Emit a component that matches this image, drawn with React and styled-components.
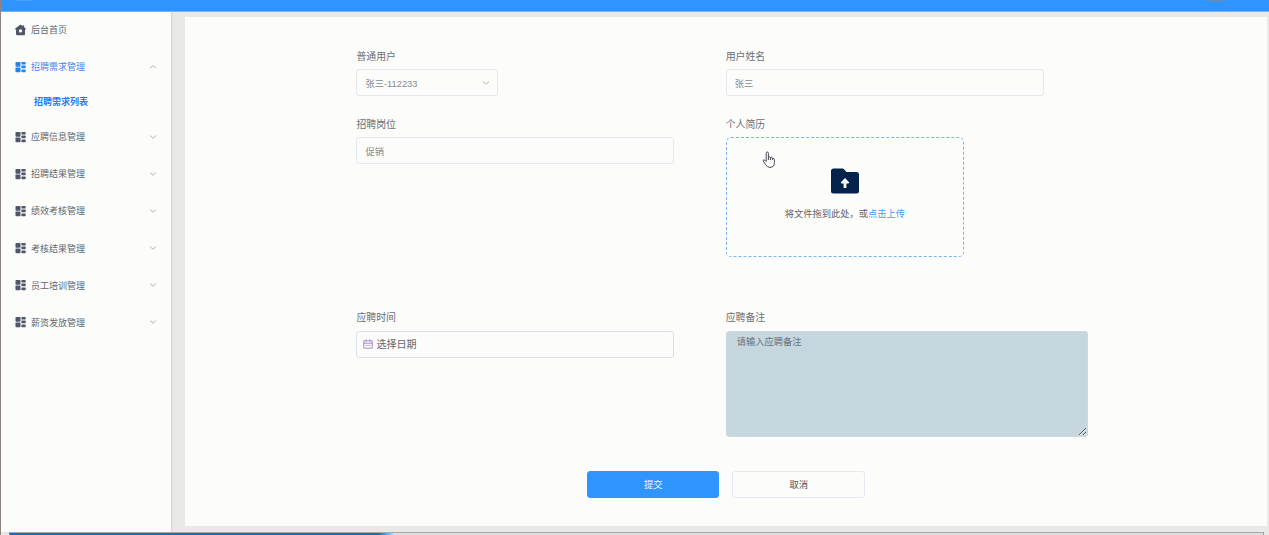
import React from 'react'
import styled, { createGlobalStyle } from 'styled-components'

const GlobalStyle = createGlobalStyle`
* {
  box-sizing:border-box;
}
body {
  margin:0;
  overflow:hidden;
  font-family:"Liberation Sans", "Noto Sans CJK SC", sans-serif;
  color:#606266;
}
`
const Page = styled.div`
display:flex;
flex-direction:column;
height:535px;
border-left:1px solid #8d8380;
background-color:#e9e9e8;
`
const Header = styled.header`
display:flex;
justify-content:space-between;
flex:none;
height:12px;
padding:0 45px 0 15px;
background-color:#3094ff;
border-bottom:1px solid #75b5f8;
`
const Logo = styled.div`
width:17px;
height:1px;
background-color:#48a0fc;
`
const Avatar = styled.div`
width:16px;
height:2px;
border-radius:0 0 8px 8px;
background-color:#5b8fc4;
`
const Body = styled.div`
display:flex;
height:520px;
`
const Sidebar = styled.nav`
width:170px;
flex:none;
background-color:#fcfcfb;
box-shadow:1px 0 2px rgba(0, 0, 0, 0.1);
`
const MenuItem = styled.div`
display:flex;
align-items:center;
height:37.1px;
padding:0 14px 2px 13px;
font-size:9px;
color:${(props) => (props.$active ? '#4a86e8' : '#62666d')};
svg {
  flex:none;
}
`
const MenuText = styled.span`
flex:1;
margin-left:5px;
white-space:nowrap;
`
const SubItem = styled.div`
height:33px;
padding-left:33px;
line-height:33px;
font-size:9px;
font-weight:bold;
color:#2878ec;
`
const Card = styled.main`
width:1082px;
height:509px;
margin:4.5px 0 0 14px;
padding:33px 0 0 171.4px;
background-color:#fcfcfb;
`
const Form = styled.div`
display:grid;
grid-template-columns:369.3px 362px;
grid-template-rows:68px 193.5px 159.5px;
`
const Field = styled.div`
display:flex;
flex-direction:column;
align-items:flex-start;
`
const Label = styled.label`
height:19.9px;
line-height:14px;
font-size:9.9px;
color:#6b6e75;
`
const Box = styled.div`
display:flex;
align-items:center;
width:${(props) => props.$width || 318}px;
height:27px;
padding:0 7px 0 8px;
border:1px solid ${(props) => (props.$dark ? '#dcdfe6' : '#e7e9ed')};
border-radius:3px;
font-size:9.3px;
color:#85888e;
`
const DateBox = styled(Box)`
padding:0 7px 1px 6px;
`
const Value = styled.span`
flex:1;
`
const DateText = styled.span`
margin-left:3px;
font-size:10px;
color:#63666b;
`
const Upload = styled.div`
position:relative;
display:flex;
flex-direction:column;
align-items:center;
width:238.5px;
height:119.5px;
padding-top:30px;
border:1px dashed #79b3f5;
border-radius:5px;
font-size:9.25px;
`
const UploadText = styled.div`
margin-top:13px;
line-height:14px;
white-space:nowrap;
`
const UploadLink = styled.span`
color:#4b9cf6;
`
const Pointer = styled.svg`
position:absolute;
left:35px;
top:13px;
`
const Remark = styled.textarea`
width:362px;
height:106px;
padding:3px 10px;
border:1px solid #ced9df;
border-radius:3px;
outline:none;
background-color:#c6d6df;
font-family:inherit;
font-size:9.25px;
line-height:14px;
&::placeholder {
  color:#65727a;
}
`
const Buttons = styled.div`
display:flex;
gap:13px;
padding-left:230.6px;
`
const Button = styled.button`
width:132.5px;
height:27px;
padding:0;
border:1px solid ${(props) => (props.$primary ? '#3094ff' : '#e6eaf2')};
border-radius:3px;
background-color:${(props) => (props.$primary ? '#3094ff' : '#fcfcfb')};
color:${(props) => (props.$primary ? '#f1f7ff' : '#50545c')};
font-family:inherit;
font-size:9.3px;
`
const Player = styled.footer`
height:3px;
margin:0 5px 0 8px;
border-top:1px solid #a9a9a9;
border-right:1px solid #999;
background-color:#dedede;
`
const Progress = styled.div`
width:385px;
height:2px;
border-radius:1px;
background:linear-gradient(90deg, #1769d2 0, #1769d2 96%, #6fc7ff 99%, #b8e7ff 100%);
`

const HomeIcon = () => (
  <svg width="12" height="12" viewBox="0 0 12 12">
    <path d="M6.5.6 11.8 4.6Q12 5.6 11 5.9V10Q11 11.2 9.8 11.2H3.2Q2 11.2 2 10V5.9Q1 5.6 1.2 4.6Z" fill="#51566b" />
    <path d="M8.6 1.3h1.5v2H8.6Z" fill="#51566b" />
    <circle cx="6.5" cy="6.9" r="1.7" fill="#fcfcfb" />
  </svg>
)

const MenuIcon = ({ color }) => (
  <svg width="12" height="12" viewBox="0 0 12 12" fill={color}>
    <rect x="1.5" y="1" width="5" height="4.7" rx=".7" />
    <rect x="1.5" y="6.5" width="5" height="4.7" rx=".7" />
    <rect x="7.4" y="1" width="4.3" height="2.6" rx=".7" />
    <rect x="7.4" y="4.6" width="4.3" height="2.7" rx=".7" />
    <rect x="7.4" y="8.4" width="4.3" height="2.8" rx=".7" />
  </svg>
)

const Arrow = ({ up }) => (
  <svg width="8" height="6" viewBox="0 0 8 6" fill="none" stroke="#a9acb2" strokeWidth=".9">
    <path d={up ? 'M1 4.3 4 1.5 7 4.3' : 'M1 1.5 4 4.3 7 1.5'} />
  </svg>
)

const CalendarIcon = () => (
  <svg width="10" height="10" viewBox="0 0 10 10" fill="none" stroke="#9a7fce" strokeWidth=".9">
    <path d="M.8 1.8h8.4v7.4H.8ZM.8 4.2h8.4M3 .5v2M7 .5v2" />
    <path d="M2.5 6.4h5" strokeDasharray="1.2 .7" />
  </svg>
)

const FolderIcon = () => (
  <svg width="28" height="26" viewBox="0 0 28 26">
    <path d="M2.7.5H11.5Q12.4.5 13 1.2L15.5 4H25.5Q28 4 28 6.5V23Q28 25.5 25.5 25.5H2.5Q0 25.5 0 23V3.2Q0 .5 2.7.5Z" fill="#03224c" />
    <path d="M14 10 18.3 14.4 17.5 15.6H15.4V20H12.6V15.6H10.5L9.7 14.4Z" fill="#fcfcfb" />
  </svg>
)

const menus = ['应聘信息管理', '招聘结果管理', '绩效考核管理', '考核结果管理', '员工培训管理', '薪资发放管理']

const App = () => {
  return (
    <>
      <GlobalStyle />
      <Page>
        <Header>
          <Logo />
          <Avatar />
        </Header>
        <Body>
          <Sidebar>
            <MenuItem>
              <HomeIcon />
              <MenuText>后台首页</MenuText>
            </MenuItem>
            <MenuItem $active>
              <MenuIcon color="#2385ee" />
              <MenuText>招聘需求管理</MenuText>
              <Arrow up />
            </MenuItem>
            <SubItem>招聘需求列表</SubItem>
            {menus.map((name) => (
              <MenuItem key={name}>
                <MenuIcon color="#51566b" />
                <MenuText>{name}</MenuText>
                <Arrow />
              </MenuItem>
            ))}
          </Sidebar>
          <Card>
            <Form>
              <Field>
                <Label>普通用户</Label>
                <Box $width={142}>
                  <Value>张三-112233</Value>
                  <Arrow />
                </Box>
              </Field>
              <Field>
                <Label>用户姓名</Label>
                <Box>张三</Box>
              </Field>
              <Field>
                <Label>招聘岗位</Label>
                <Box>促销</Box>
              </Field>
              <Field>
                <Label>个人简历</Label>
                <Upload>
                  <FolderIcon />
                  <UploadText>
                    将文件拖到此处，或<UploadLink>点击上传</UploadLink>
                  </UploadText>
                  <Pointer width="14" height="18" viewBox="0 0 14 18" fill="#fcfcfb" stroke="#4c4c55" strokeWidth="1">
                    <path d="M4.2 10.5V2.3Q4.2 1 5.3 1T6.4 2.3V6.8Q6.6 5.6 7.6 5.8T8.5 7Q8.8 6 9.7 6.3T10.5 7.5Q12.4 6.8 12.4 8.6V11.5Q12.4 16.4 8 16.4 5.2 16.4 3.8 13.8L1.3 10.2Q.8 9.1 1.8 8.9T4.2 10.5M6.4 6.8V9M8.5 7V9M10.5 7.5V9" />
                  </Pointer>
                </Upload>
              </Field>
              <Field>
                <Label>应聘时间</Label>
                <DateBox $dark>
                  <CalendarIcon />
                  <DateText>选择日期</DateText>
                </DateBox>
              </Field>
              <Field>
                <Label>应聘备注</Label>
                <Remark placeholder="请输入应聘备注" />
              </Field>
            </Form>
            <Buttons>
              <Button $primary>提交</Button>
              <Button>取消</Button>
            </Buttons>
          </Card>
        </Body>
        <Player>
          <Progress />
        </Player>
      </Page>
    </>
  )
}

export default App
